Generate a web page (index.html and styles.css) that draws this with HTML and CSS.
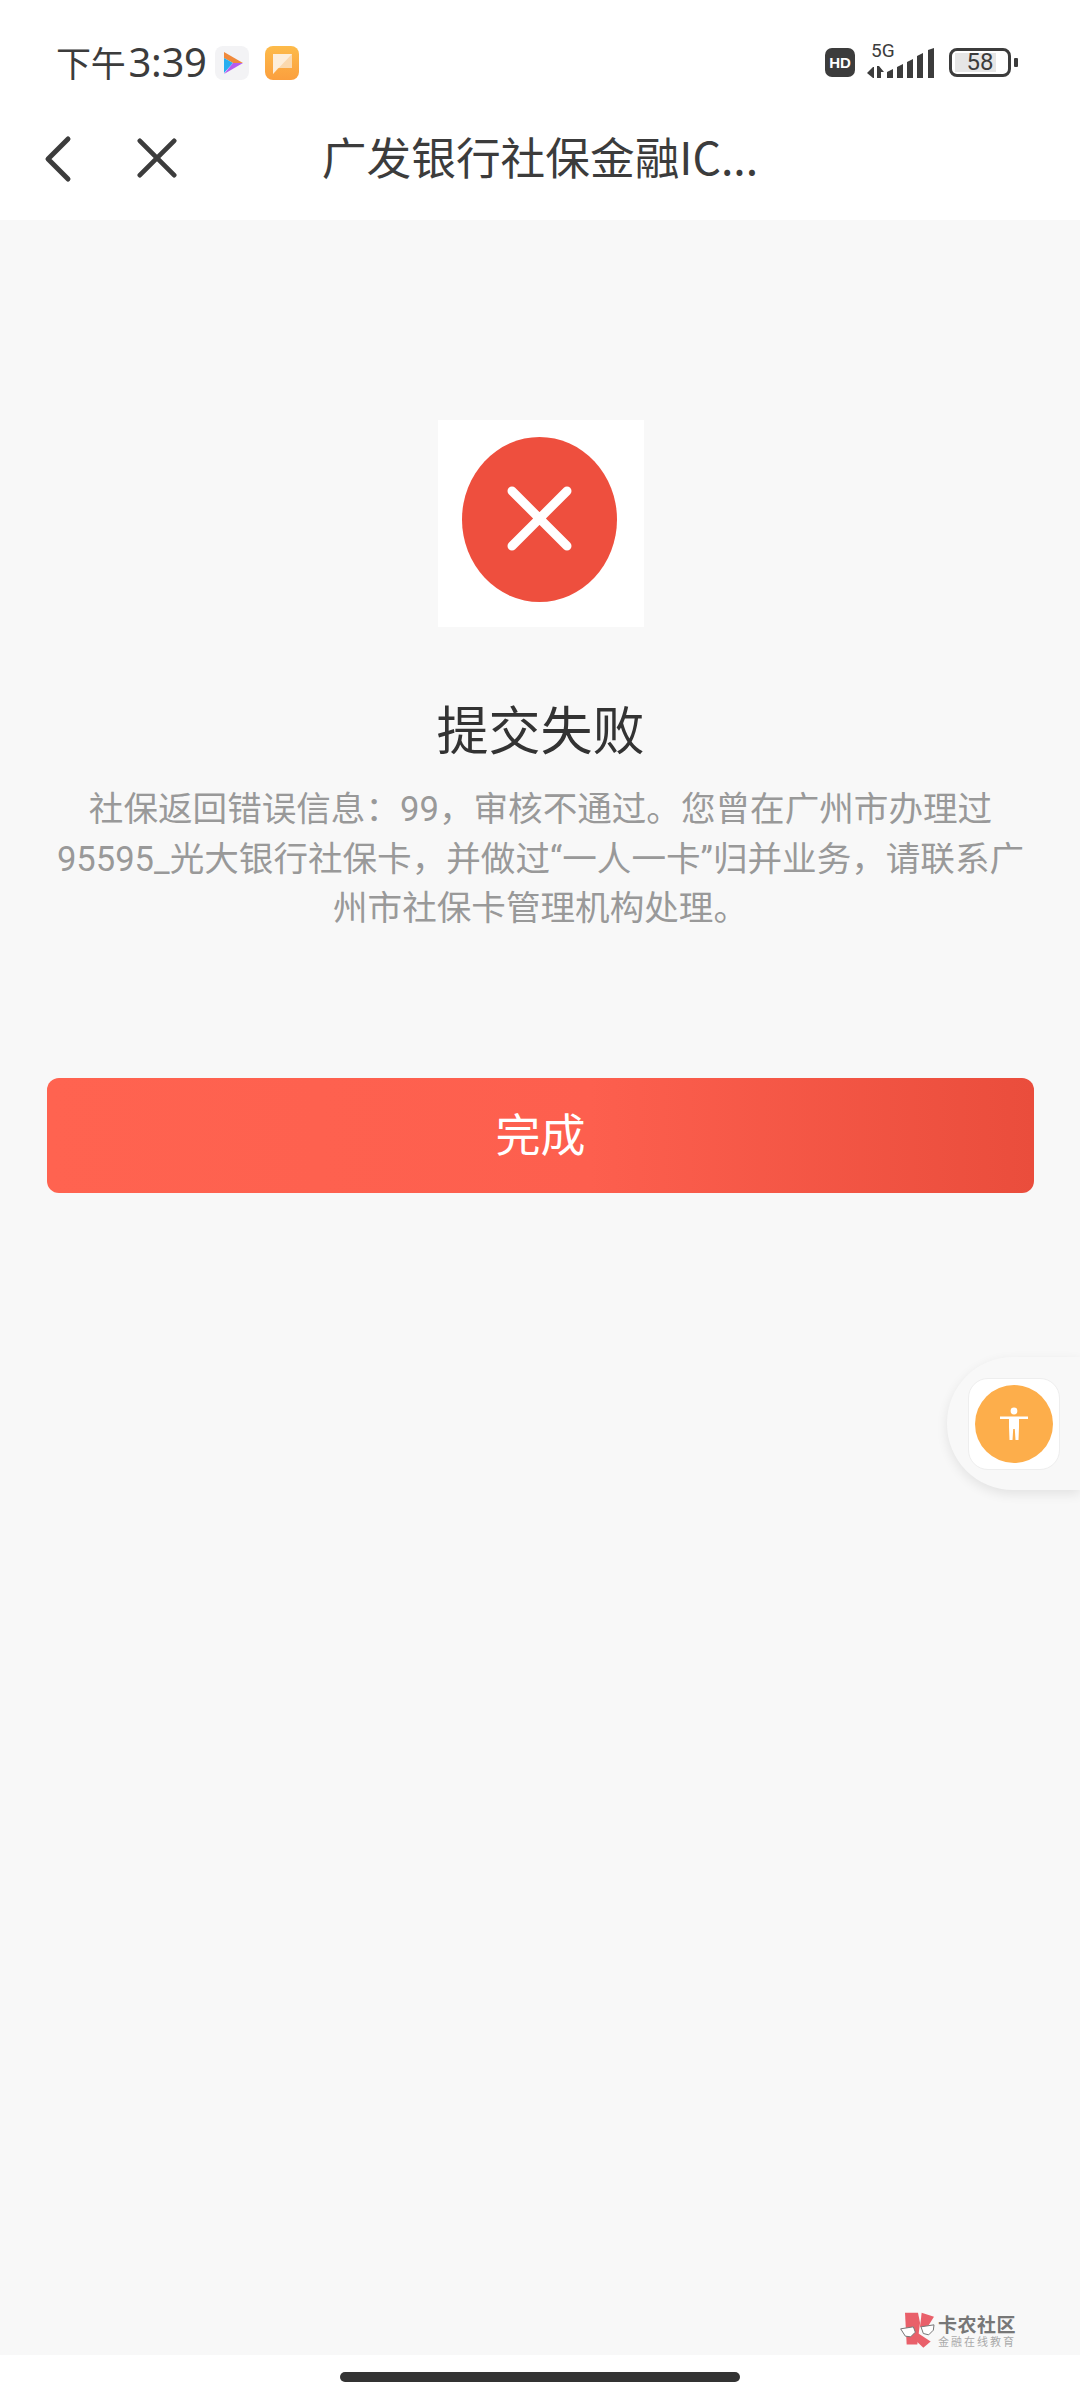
FILE: index.html
```html
<!DOCTYPE html>
<html lang="zh-CN">
<head>
    <meta charset="UTF-8">
    <meta name="viewport" content="width=device-width, initial-scale=1.0">
    <title>提交失败</title>
    <link rel="stylesheet" href="styles.css">
</head>
<body>
    <div class="top">
        <div class="status">
            <span class="time"><span class="time-cn">下午</span>3:39</span>
            <svg class="app-icon play" viewBox="0 0 34 34">
                <rect width="34" height="34" rx="8" fill="#f3f3f5"/>
                <path d="M9 6 L28 17 L18 17 L9 12 Z" fill="#f08a3c"/>
                <path d="M9 12 L18 17 L9 27 Z" fill="#27aef0"/>
                <path d="M18 17 L28 17 L9 28 L13 23 Z" fill="#b65cf0"/>
            </svg>
            <svg class="app-icon note" viewBox="0 0 34 34">
                <defs>
                    <linearGradient id="noteBg" x1="0" y1="0" x2="0" y2="1">
                        <stop offset="0" stop-color="#fdbb4a"/>
                        <stop offset="1" stop-color="#fb9f3e"/>
                    </linearGradient>
                </defs>
                <rect width="34" height="34" rx="8" fill="url(#noteBg)"/>
                <path d="M8 8 H27 V22 H13 L8 28 Z" fill="#fbd9ae"/>
                <path d="M8 28 L8 8 H27 Z" fill="#fff" opacity=".55"/>
            </svg>
            <div class="status-right">
                <span class="hd">HD</span>
                <div class="signal">
                    <span class="five-g">5G</span>
                    <svg class="bars" viewBox="0 0 67 30">
                        <path d="M0 25 L6 19 H7 V30 H6 Z" fill="#3c3c3c"/>
                        <path d="M10 18 H12 L17 24 H14 V30 H10 Z" fill="#3c3c3c"/>
                        <path d="M20 24 L26 21 V30 H20 Z" fill="#3c3c3c"/>
                        <path d="M30 19 L36 16 V30 H30 Z" fill="#3c3c3c"/>
                        <path d="M40 14 L46 11 V30 H40 Z" fill="#3c3c3c"/>
                        <path d="M50 8 L56 5 V30 H50 Z" fill="#3c3c3c"/>
                        <path d="M61 2 L67 0 V30 H61 Z" fill="#3c3c3c"/>
                    </svg>
                </div>
                <div class="battery">
                    <div class="battery-body">
                        <span class="battery-fill"></span>
                        <span class="battery-num">58</span>
                    </div>
                    <span class="battery-cap"></span>
                </div>
            </div>
        </div>
        <div class="nav">
            <svg class="nav-icon back" viewBox="0 0 30 48">
                <path d="M25 4 L5 24 L25 44" fill="none" stroke="#3c3c3c" stroke-width="5" stroke-linecap="round" stroke-linejoin="round"/>
            </svg>
            <svg class="nav-icon close" viewBox="0 0 42 42">
                <path d="M3 3 L39 39 M39 3 L3 39" fill="none" stroke="#3c3c3c" stroke-width="5" stroke-linecap="round"/>
            </svg>
            <div class="nav-title">广发银行社保金融IC...</div>
        </div>
    </div>

    <div class="content">
        <div class="result-icon">
            <svg viewBox="0 0 155 165" class="fail-mark">
                <ellipse cx="77.5" cy="82.5" rx="77.5" ry="82.5" fill="#ee4f3e"/>
                <path d="M50 54 L105 109 M105 54 L50 109" stroke="#fff" stroke-width="9" stroke-linecap="round"/>
            </svg>
        </div>
        <h1 class="result-title">提交失败</h1>
        <p class="result-msg">社保返回错误信息：99，审核不通过。您曾在广州市办理过95595_光大银行社保卡，并做过“一人一卡”归并业务，请联系广州市社保卡管理机构处理。</p>
        <button class="done-btn">完成</button>
    </div>

    <div class="float-pill">
        <div class="float-box">
            <div class="float-circle">
                <svg viewBox="0 0 30 34" class="person">
                    <circle cx="15" cy="4" r="3.4" fill="#fff"/>
                    <path d="M1 9.5 H29 V12 H20 V20 L19.5 33 H16.5 L15.8 22 H14.2 L13.5 33 H10.5 L10 20 V12 H1 Z" fill="#fff"/>
                </svg>
            </div>
        </div>
    </div>

    <div class="watermark">
        <svg viewBox="120 98 105 110" class="wm-logo">
            <path d="M135 100 H174 L180 130 L172 195 H140 Z" fill="#e9606a"/>
            <path d="M185 100 L222 112 L198 150 L180 142 Z" fill="#e9606a"/>
            <path d="M172 160 L212 186 L190 205 L164 180 Z" fill="#e9606a"/>
            <path d="M122 148 L160 142 L166 158 L152 172 L136 170 Z" fill="#fff" stroke="#777" stroke-width="3"/>
            <path d="M183 142 L222 136 L220 152 L206 166 L190 162 Z" fill="#fff" stroke="#777" stroke-width="3"/>
        </svg>
        <div class="wm-text">
            <span class="wm-name">卡农社区</span>
            <span class="wm-sub">金融在线教育</span>
        </div>
    </div>

    <div class="bottom-bar"><span class="home-bar"></span></div>
</body>
</html>
```

FILE: styles.css
```css
* {
    box-sizing: border-box;
}
html, body {
    margin: 0;
    padding: 0;
}
body {
    width: 1080px;
    height: 2400px;
    position: relative;
    overflow: hidden;
    display: flex;
    flex-direction: column;
    background-color: #f8f8f8;
    font-family: "Noto Sans CJK SC", "Noto Sans", sans-serif;
}
.top {
    height: 220px;
    background-color: #fff;
}
.status {
    height: 113px;
    padding: 38px 62px 0 56px;
    display: flex;
    align-items: flex-start;
}
.time {
    width: 159px;
    font-size: 40px;
    line-height: 48px;
    color: #3c3c3c;
    letter-spacing: -0.3px;
    font-family: "Noto Sans", "Noto Sans CJK SC", sans-serif;
}
.time-cn {
    font-size: 35px;
    margin-right: 3px;
}
.app-icon {
    width: 34px;
    height: 34px;
    margin-top: 8px;
}
.note {
    margin-left: 16px;
}
.status-right {
    margin-left: auto;
    display: flex;
    align-items: flex-start;
}
.hd {
    width: 30px;
    height: 29px;
    margin-top: 10px;
    border-radius: 7px;
    background-color: #3c3c3c;
    color: #fff;
    font-size: 15px;
    font-weight: 700;
    line-height: 29px;
    text-align: center;
    font-family: "Liberation Sans", sans-serif;
}
.signal {
    position: relative;
    width: 67px;
    height: 30px;
    margin-left: 12px;
    margin-top: 10px;
}
.five-g {
    position: absolute;
    left: 4px;
    top: -8px;
    font-size: 19px;
    line-height: 22px;
    color: #3c3c3c;
    font-family: "Roboto", sans-serif;
}
.bars {
    display: block;
    width: 67px;
    height: 30px;
}
.battery {
    display: flex;
    align-items: center;
    margin-left: 15px;
    margin-top: 10px;
}
.battery-body {
    position: relative;
    width: 62px;
    height: 29px;
    border: 3px solid #3c3c3c;
    border-radius: 8px;
}
.battery-fill {
    position: absolute;
    left: 3px;
    top: 2px;
    bottom: 2px;
    width: 41px;
    background-color: #e6e6e6;
}
.battery-num {
    position: relative;
    display: block;
    text-align: center;
    font-size: 24px;
    line-height: 23px;
    color: #3c3c3c;
    font-family: "Roboto", sans-serif;
}
.battery-cap {
    width: 4px;
    height: 9px;
    margin-left: 3px;
    border-radius: 1px;
    background-color: #3c3c3c;
}
.nav {
    position: relative;
    height: 107px;
}
.nav-icon {
    position: absolute;
}
.back {
    left: 43px;
    top: 22px;
    width: 30px;
    height: 48px;
}
.close {
    left: 137px;
    top: 25px;
    width: 40px;
    height: 40px;
}
.nav-title {
    text-align: center;
    font-size: 44.7px;
    line-height: 60px;
    padding-top: 13px;
    color: #3c3c3c;
}
.content {
    flex: 1;
    display: flex;
    flex-direction: column;
    align-items: center;
    padding: 200px 46px 0 47px;
}
.result-icon {
    width: 206px;
    height: 207px;
    padding: 17px 2px 0 0;
    background-color: #fff;
    display: flex;
    justify-content: center;
    align-items: flex-start;
}
.fail-mark {
    width: 155px;
    height: 165px;
}
.result-title {
    margin: 66px 0 0;
    font-size: 52px;
    font-weight: 400;
    line-height: 70px;
    color: #333;
}
.result-msg {
    margin: 22px -4px 0;
    font-family: "Roboto", "Noto Sans CJK SC", sans-serif;
    font-size: 34.6px;
    line-height: 49.5px;
    color: #999;
    text-align: center;
}
.done-btn {
    width: 987px;
    height: 115px;
    margin-top: 144px;
    padding: 0 0 6px;
    border: none;
    border-radius: 12px;
    background: linear-gradient(90deg, #ff6350 0%, #fd5f4e 55%, #ea4d3c 100%);
    color: #fff;
    font-family: inherit;
    font-size: 45px;
}
.float-pill {
    position: absolute;
    right: 0;
    top: 1357px;
    width: 133px;
    height: 133px;
    border-radius: 66px 0 0 66px;
    background-color: #f8f8f8;
    box-shadow: 0 4px 12px rgba(0, 0, 0, 0.09);
    padding: 21px;
}
.float-box {
    width: 92px;
    height: 92px;
    border-radius: 20px;
    background-color: #fff;
    border: 1px solid #eee;
    padding: 6px;
}
.float-circle {
    width: 78px;
    height: 78px;
    border-radius: 50%;
    background-color: #fdae4b;
    display: flex;
    align-items: center;
    justify-content: center;
}
.person {
    width: 30px;
    height: 34px;
}
.watermark {
    position: absolute;
    left: 900px;
    top: 2312px;
    display: flex;
    align-items: center;
    gap: 3px;
}
.wm-logo {
    width: 35px;
    height: 37px;
}
.wm-text {
    display: flex;
    flex-direction: column;
    white-space: nowrap;
}
.wm-name {
    font-size: 19px;
    line-height: 21px;
    font-weight: 700;
    color: #777;
    letter-spacing: 0.5px;
}
.wm-sub {
    font-size: 11px;
    line-height: 14px;
    color: #aaa;
    letter-spacing: 2px;
}
.bottom-bar {
    height: 45px;
    background-color: #fff;
    display: flex;
    justify-content: center;
    padding-top: 17px;
}
.home-bar {
    width: 400px;
    height: 10px;
    border-radius: 5px;
    background-color: #333;
}
```
